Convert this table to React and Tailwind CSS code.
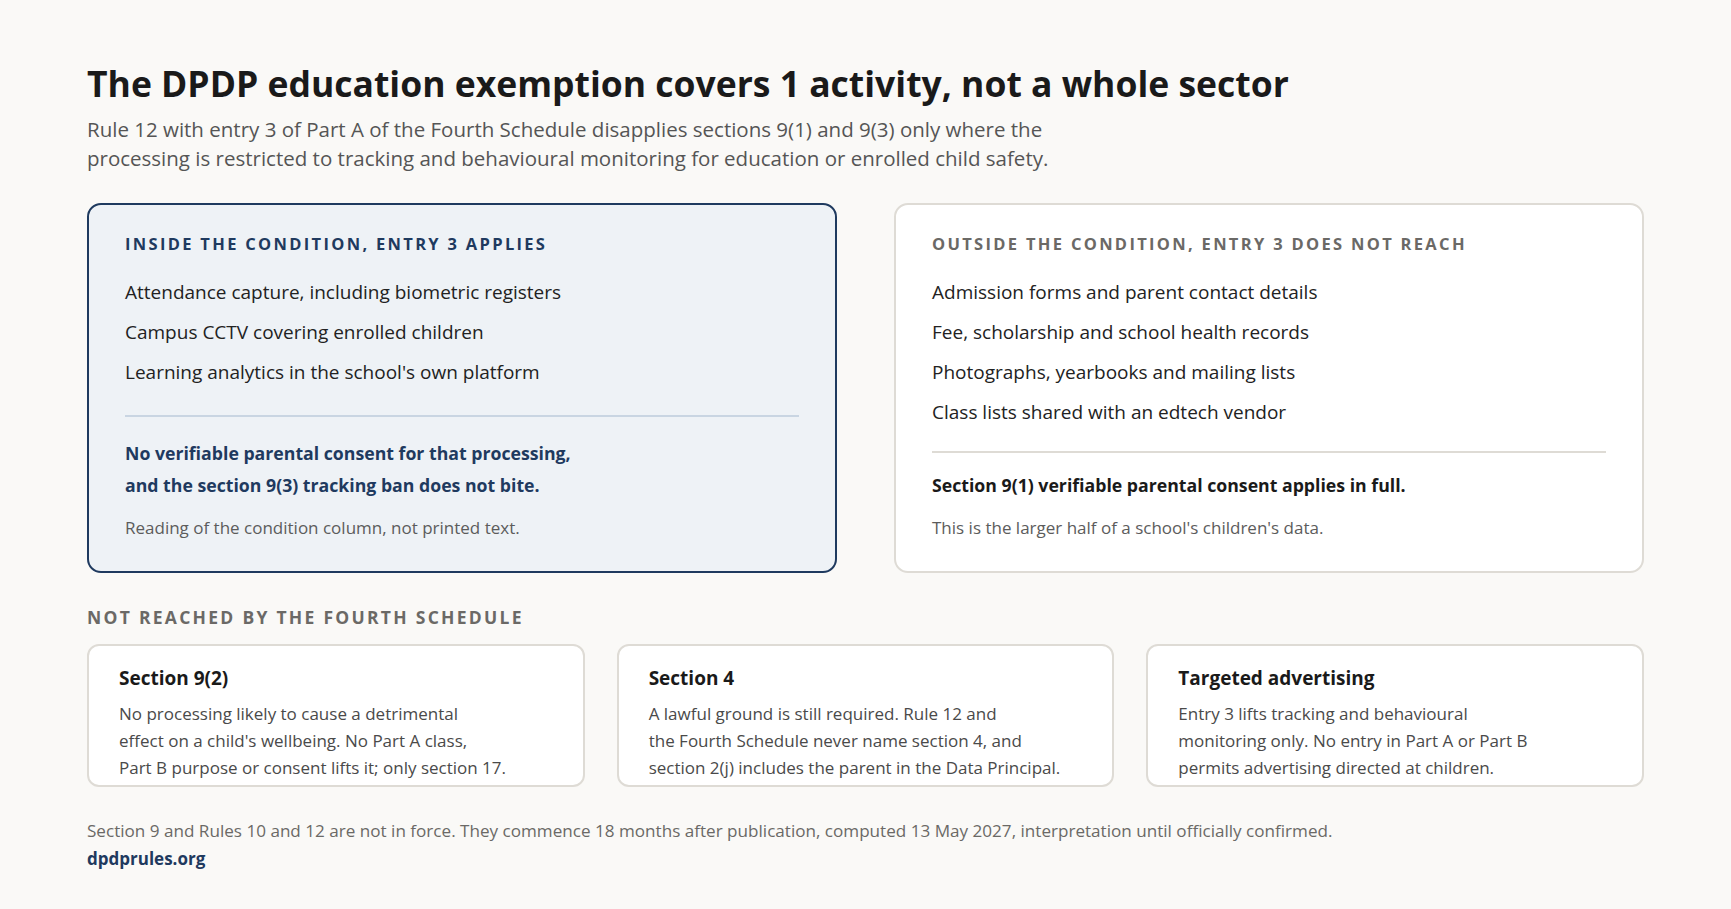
import React from 'react';

const inside = [
  'Attendance capture, including biometric registers',
  'Campus CCTV covering enrolled children',
  "Learning analytics in the school's own platform",
];

const outside = [
  'Admission forms and parent contact details',
  'Fee, scholarship and school health records',
  'Photographs, yearbooks and mailing lists',
  'Class lists shared with an edtech vendor',
];

const notReached = [
  {
    title: 'Section 9(2)',
    lines: [
      'No processing likely to cause a detrimental',
      "effect on a child's wellbeing. No Part A class,",
      'Part B purpose or consent lifts it; only section 17.',
    ],
  },
  {
    title: 'Section 4',
    lines: [
      'A lawful ground is still required. Rule 12 and',
      'the Fourth Schedule never name section 4, and',
      'section 2(j) includes the parent in the Data Principal.',
    ],
  },
  {
    title: 'Targeted advertising',
    lines: [
      'Entry 3 lifts tracking and behavioural',
      'monitoring only. No entry in Part A or Part B',
      'permits advertising directed at children.',
    ],
  },
];

function ConditionCard({ tone, heading, items, verdict, note }) {
  const isInside = tone === 'inside';
  return (
    <div
      className={
        isInside
          ? 'flex flex-col rounded-[14px] border-2 border-[#1f3a5f] bg-[#eef2f6] px-[36px] pt-[27px] pb-[31px]'
          : 'flex flex-col rounded-[14px] border-2 border-[#dedbd5] bg-white px-[36px] pt-[27px] pb-[31px]'
      }
    >
      <h2
        className={
          isInside
            ? 'text-[16.5px] leading-6 font-bold uppercase tracking-[0.14em] text-[#1f3a5f]'
            : 'text-[16.5px] leading-6 font-bold uppercase tracking-[0.14em] text-[#6b6966]'
        }
      >
        {heading}
      </h2>
      <ul className="mt-[22px] flex flex-col gap-3">
        {items.map((item) => (
          <li key={item} className="text-[19px] leading-7 text-[#222]">
            {item}
          </li>
        ))}
      </ul>
      <div
        className={
          isInside
            ? 'mt-auto border-t-2 border-[#c9d5e2] pt-5'
            : 'mt-[25px] border-t-2 border-[#dedbd5] pt-4'
        }
      >
        <p
          className={
            isInside
              ? 'text-[17.7px] leading-8 font-bold text-[#1f3a5f]'
              : 'text-[17.7px] leading-8 font-bold text-[#1a1a1a]'
          }
        >
          {verdict}
        </p>
        <p className="mt-[15px] text-[17px] leading-6 text-[#5c5c5c]">{note}</p>
      </div>
    </div>
  );
}

export default function App() {
  return (
    <div className="min-h-screen bg-[#faf9f7] px-[87px] pt-[61px] pb-10 font-['Open_Sans',sans-serif]">
      {/* Heading */}
      <h1 className="text-[35.5px] leading-[44px] font-bold text-[#1a1a1a]">
        The DPDP education exemption covers 1 activity, not a whole sector
      </h1>
      <p className="mt-[10px] text-[20.5px] leading-[29px] text-[#555]">
        Rule 12 with entry 3 of Part A of the Fourth Schedule disapplies sections 9(1) and 9(3) only where the
        <br />
        processing is restricted to tracking and behavioural monitoring for education or enrolled child safety.
      </p>

      {/* Inside / outside */}
      <div className="mt-[30px] grid grid-cols-2 gap-[57px]">
        <ConditionCard
          tone="inside"
          heading="Inside the condition, entry 3 applies"
          items={inside}
          verdict={
            <>
              No verifiable parental consent for that processing,
              <br />
              and the section 9(3) tracking ban does not bite.
            </>
          }
          note="Reading of the condition column, not printed text."
        />
        <ConditionCard
          tone="outside"
          heading="Outside the condition, entry 3 does not reach"
          items={outside}
          verdict="Section 9(1) verifiable parental consent applies in full."
          note="This is the larger half of a school's children's data."
        />
      </div>

      {/* Not reached */}
      <h3 className="mt-[32px] text-[17.5px] leading-6 font-bold uppercase tracking-[0.13em] text-[#6b6966]">
        Not reached by the Fourth Schedule
      </h3>
      <div className="mt-[15px] grid grid-cols-3 gap-8">
        {notReached.map((card) => (
          <div
            key={card.title}
            className="h-[143px] overflow-hidden rounded-[12px] border-2 border-[#dedbd5] bg-white px-[30px] pt-[18px]"
          >
            <h4 className="text-[19px] leading-7 font-bold text-[#1a1a1a]">{card.title}</h4>
            <p className="mt-[8px] text-[17px] leading-[27px] text-[#4a4a4a]">
              {card.lines.map((line, i) => (
                <React.Fragment key={i}>
                  {i > 0 && <br />}
                  {line}
                </React.Fragment>
              ))}
            </p>
          </div>
        ))}
      </div>

      {/* Footnote */}
      <p className="mt-[30px] text-[17.1px] leading-7 text-[#6b6966]">
        Section 9 and Rules 10 and 12 are not in force. They commence 18 months after publication, computed 13 May 2027, interpretation until officially confirmed.
      </p>
      <p className="text-[17px] leading-7 font-bold text-[#1f3a5f]">dpdprules.org</p>
    </div>
  );
}
